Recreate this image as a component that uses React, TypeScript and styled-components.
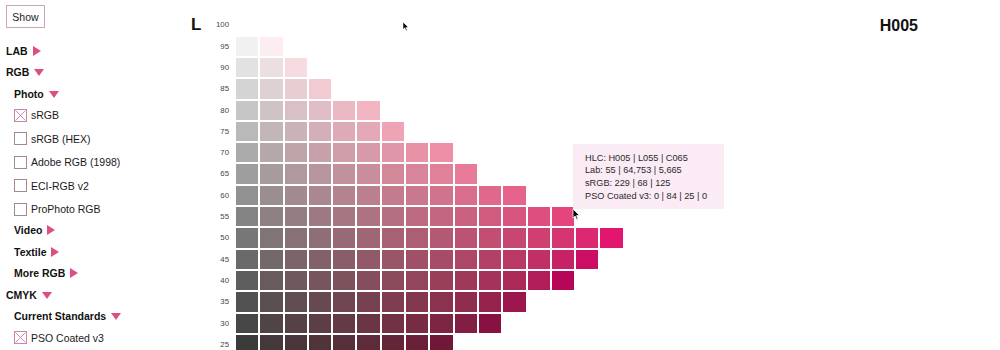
import React from "react";
import styled, { createGlobalStyle } from "styled-components";

const GlobalStyle = createGlobalStyle`
  html, body { margin: 0; padding: 0; background: #fff; }
  body { font-family: "Liberation Sans", Arial, Helvetica, sans-serif; color: #111; }
`;

const HUE = 5;
const L_ROWS = [100, 95, 90, 85, 80, 75, 70, 65, 60, 55, 50, 45, 40, 35, 30, 25];
const COUNTS: Record<number, number> = {
  100: 0, 95: 2, 90: 3, 85: 4, 80: 6, 75: 7, 70: 9, 65: 10, 60: 12,
  55: 14, 50: 16, 45: 15, 40: 14, 35: 12, 30: 11, 25: 9,
};

function lchToRgb(L: number, C: number, H: number): string {
  const h = (H * Math.PI) / 180;
  const a = C * Math.cos(h);
  const b = C * Math.sin(h);
  const fy = (L + 16) / 116;
  const fx = fy + a / 500;
  const fz = fy - b / 200;
  const eps = 216 / 24389;
  const k = 24389 / 27;
  const finv = (t: number) => (t * t * t > eps ? t * t * t : (116 * t - 16) / k);
  const X = 0.96422 * finv(fx);
  const Y = L > k * eps ? fy * fy * fy : L / k;
  const Z = 0.82521 * finv(fz);
  const lr = 3.1338561 * X - 1.6168667 * Y - 0.4906146 * Z;
  const lg = -0.9787684 * X + 1.9161415 * Y + 0.033454 * Z;
  const lb = 0.0719453 * X - 0.2289914 * Y + 1.4052427 * Z;
  const g = (v: number) => {
    const c = v <= 0.0031308 ? 12.92 * v : 1.055 * Math.pow(Math.max(v, 0), 1 / 2.4) - 0.055;
    return Math.round(Math.min(1, Math.max(0, c)) * 255);
  };
  return `rgb(${g(lr)}, ${g(lg)}, ${g(lb)})`;
}

const Page = styled.div`
  position: relative;
  display: flex;
  width: 1000px;
  height: 350px;
  overflow: hidden;
`;

const Sidebar = styled.div`
  width: 191px;
  flex: none;
  padding: 5px 0 0 6px;
  box-sizing: border-box;
`;

const ShowButton = styled.button`
  display: block;
  width: 39px;
  height: 23px;
  padding: 0;
  margin: 0 0 12px;
  border: 1px solid #c8a6b9;
  background: #fff;
  font-family: "Liberation Sans", Arial, sans-serif;
  font-size: 10.5px;
  color: #222;
  border-radius: 0;
`;

const Heading = styled.div<{ $indent: number }>`
  display: flex;
  align-items: center;
  height: 21.5px;
  padding-left: ${(p) => p.$indent}px;
  font-size: 10.5px;
  font-weight: 700;
  color: #111;
  gap: 5px;
`;

const Tri = styled.span<{ $open: boolean }>`
  display: inline-block;
  width: 0;
  height: 0;
  ${(p) =>
    p.$open
      ? `border-left: 5px solid transparent; border-right: 5px solid transparent; border-top: 7.5px solid #dd4d86; margin-top: 1px;`
      : `border-top: 5px solid transparent; border-bottom: 5px solid transparent; border-left: 8px solid #dd4d86;`}
`;

const CheckGroup = styled.div`
  display: flex;
  flex-direction: column;
  gap: 2.5px;
  padding-left: 8px;
`;

const CheckRow = styled.label`
  display: flex;
  align-items: center;
  height: 21px;
  gap: 4px;
  font-size: 10.5px;
  color: #1a1a1a;
`;

const Box = styled.span<{ $checked: boolean }>`
  width: 13px;
  height: 13px;
  box-sizing: border-box;
  border: 1px solid ${(p) => (p.$checked ? "#c886ad" : "#a08995")};
  background: #fff;
  display: inline-flex;
  flex: none;
  svg { display: block; }
`;

const Main = styled.div`
  flex: 1;
  display: flex;
  align-items: flex-start;
  padding-top: 15.35px;
  padding-right: 82px;
`;

const AxisTitle = styled.div`
  width: 12px;
  height: 19.3px;
  line-height: 19.3px;
  font-size: 17px;
  font-weight: 700;
  color: #111;
`;

const Rows = styled.div`
  display: flex;
  flex-direction: column;
  gap: 2px;
`;

const Row = styled.div`
  display: flex;
  gap: 2px;
  height: 19.3px;
`;

const RowLabel = styled.div`
  width: 31px;
  box-sizing: border-box;
  padding-right: 5px;
  text-align: right;
  font-size: 7.8px;
  line-height: 19.3px;
  color: #444;
`;

const Cell = styled.div`
  width: 22.31px;
  height: 19.3px;
`;

const Hue = styled.div`
  margin-left: auto;
  height: 19.3px;
  line-height: 21px;
  font-size: 16px;
  font-weight: 700;
  color: #111;
`;

const Tooltip = styled.div`
  position: absolute;
  left: 573px;
  top: 144px;
  width: 151px;
  height: 65px;
  box-sizing: border-box;
  padding: 7.5px 0 0 12px;
  background: #fbebf5;
  font-size: 9.2px;
  line-height: 12.7px;
  color: #2a2a2a;
  white-space: nowrap;
`;

const Cursor = styled.svg<{ $x: number; $y: number }>`
  position: absolute;
  left: ${(p) => p.$x}px;
  top: ${(p) => p.$y}px;
  overflow: visible;
`;

type Item =
  | { kind: "head"; label: string; indent: number; open: boolean }
  | { kind: "checks"; items: { label: string; checked: boolean }[] };

const MENU: Item[] = [
  { kind: "head", label: "LAB", indent: 0, open: false },
  { kind: "head", label: "RGB", indent: 0, open: true },
  { kind: "head", label: "Photo", indent: 8, open: true },
  {
    kind: "checks",
    items: [
      { label: "sRGB", checked: true },
      { label: "sRGB (HEX)", checked: false },
      { label: "Adobe RGB (1998)", checked: false },
      { label: "ECI-RGB v2", checked: false },
      { label: "ProPhoto RGB", checked: false },
    ],
  },
  { kind: "head", label: "Video", indent: 8, open: false },
  { kind: "head", label: "Textile", indent: 8, open: false },
  { kind: "head", label: "More RGB", indent: 8, open: false },
  { kind: "head", label: "CMYK", indent: 0, open: true },
  { kind: "head", label: "Current Standards", indent: 8, open: true },
  { kind: "checks", items: [{ label: "PSO Coated v3", checked: true }] },
];

const CheckMark = () => (
  <svg width="11" height="11" viewBox="0 0 11 11">
    <path d="M0.5 0.5 L10.5 10.5 M10.5 0.5 L0.5 10.5" stroke="#d98ab4" strokeWidth="1" />
  </svg>
);

const ArrowCursor = ({ x, y, s }: { x: number; y: number; s: number }) => (
  <Cursor $x={x} $y={y} width={8 * s} height={13 * s} viewBox="0 0 8 13">
    <path
      d="M0 0 L0 10 L2.4 7.8 L4.2 11.8 L5.6 11.2 L3.9 7.3 L7 7.1 Z"
      fill="#000"
      stroke="#fff"
      strokeWidth="0.8"
      strokeLinejoin="round"
    />
  </Cursor>
);

export default function App() {
  return (
    <>
      <GlobalStyle />
      <Page>
        <Sidebar>
          <ShowButton>Show</ShowButton>
          {MENU.map((item, i) =>
            item.kind === "head" ? (
              <Heading key={i} $indent={item.indent}>
                {item.label}
                <Tri $open={item.open} />
              </Heading>
            ) : (
              <CheckGroup key={i}>
                {item.items.map((c) => (
                  <CheckRow key={c.label}>
                    <Box $checked={c.checked}>{c.checked && <CheckMark />}</Box>
                    {c.label}
                  </CheckRow>
                ))}
              </CheckGroup>
            )
          )}
        </Sidebar>
        <Main>
          <AxisTitle>L</AxisTitle>
          <Rows>
            {L_ROWS.map((l) => (
              <Row key={l}>
                <RowLabel>{l}</RowLabel>
                {Array.from({ length: COUNTS[l] }, (_, ci) => (
                  <Cell key={ci} style={{ background: lchToRgb(l, ci * 5, HUE) }} />
                ))}
              </Row>
            ))}
          </Rows>
          <Hue>H005</Hue>
        </Main>
        <Tooltip>
          HLC: H005 | L055 | C065
          <br />
          Lab: 55 | 64,753 | 5,665
          <br />
          sRGB: 229 | 68 | 125
          <br />
          PSO Coated v3: 0 | 84 | 25 | 0
        </Tooltip>
        <ArrowCursor x={403} y={22} s={0.75} />
        <ArrowCursor x={573} y={209} s={0.9} />
      </Page>
    </>
  );
}
